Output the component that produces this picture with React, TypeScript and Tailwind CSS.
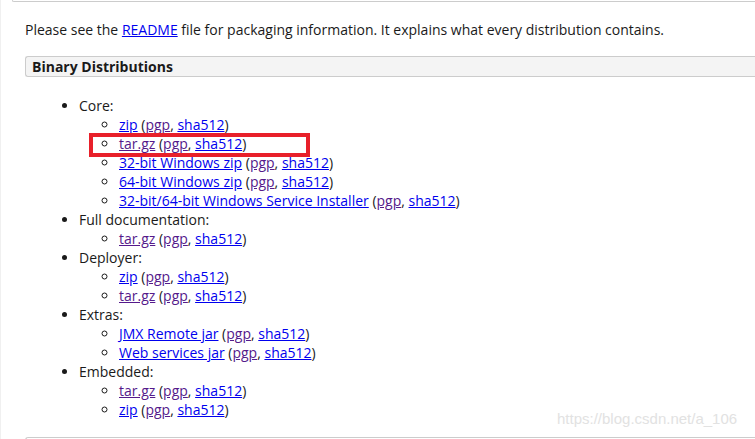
import React from "react";

type Link = { text: string; visited?: boolean };
type Entry = { main: Link; pgpVisited?: boolean };
type Group = { title: string; items: Entry[] };

const groups: Group[] = [
  {
    title: "Core:",
    items: [
      { main: { text: "zip" }, pgpVisited: true },
      { main: { text: "tar.gz", visited: true }, pgpVisited: true },
      { main: { text: "32-bit Windows zip" }, pgpVisited: true },
      { main: { text: "64-bit Windows zip" }, pgpVisited: true },
      { main: { text: "32-bit/64-bit Windows Service Installer" }, pgpVisited: true },
    ],
  },
  {
    title: "Full documentation:",
    items: [{ main: { text: "tar.gz", visited: true }, pgpVisited: true }],
  },
  {
    title: "Deployer:",
    items: [
      { main: { text: "zip" }, pgpVisited: true },
      { main: { text: "tar.gz", visited: true }, pgpVisited: true },
    ],
  },
  {
    title: "Extras:",
    items: [
      { main: { text: "JMX Remote jar" }, pgpVisited: true },
      { main: { text: "Web services jar" }, pgpVisited: true },
    ],
  },
  {
    title: "Embedded:",
    items: [
      { main: { text: "tar.gz", visited: true }, pgpVisited: true },
      { main: { text: "zip" }, pgpVisited: true },
    ],
  },
];

function A({ text, visited }: Link) {
  return (
    <a
      href="#"
      className={`underline ${visited ? "text-[#551a8b]" : "text-[#0000ee]"}`}
    >
      {text}
    </a>
  );
}

export default function App() {
  return (
    <div className="relative w-[755px] h-[439px] overflow-hidden bg-white font-['Open_Sans',sans-serif] text-[14px] leading-[19px] text-[#1a1a1a]">
      {/* faint page edge */}
      <div className="absolute left-0 top-0 bottom-0 w-px bg-[#f0f0f0]" />

      <div className="h-[2px] ml-[12px] border-b border-l border-[#cccccc] rounded-bl-[3px]" />

      <div className="pl-[25px]">
        <p className="mt-[18px]">
          Please see the <A text="README" /> file for packaging information. It explains what every
          distribution contains.
        </p>

        <div className="mt-[17px] h-[21px] pl-[6px] bg-[#f4f4f4] border border-r-0 border-[#cccccc] rounded-l-[3px] font-bold leading-[19px]">
          Binary Distributions
        </div>

        <ul className="mt-[19px] pl-[54px] list-disc">
          {groups.map((g) => (
            <li key={g.title}>
              {g.title}
              <ul className="pl-[40px] list-[circle]">
                {g.items.map((e, i) => (
                  <li key={i}>
                    <A {...e.main} /> (<A text="pgp" visited={e.pgpVisited} />,{" "}
                    <A text="sha512" />)
                  </li>
                ))}
              </ul>
            </li>
          ))}
        </ul>
      </div>

      <div className="absolute left-[25px] right-0 top-[437px] h-[6px] border-t border-l border-[#cccccc] rounded-tl-[3px]" />

      <div className="absolute left-[89px] top-[133px] w-[221px] h-[24px] border-[4px] border-[#e8202a]" />

      <div className="absolute left-[557px] top-[409px] font-['Liberation_Sans',sans-serif] text-[15px] text-[#e2e2e2]">
        https://blog.csdn.net/a_106
      </div>
    </div>
  );
}
